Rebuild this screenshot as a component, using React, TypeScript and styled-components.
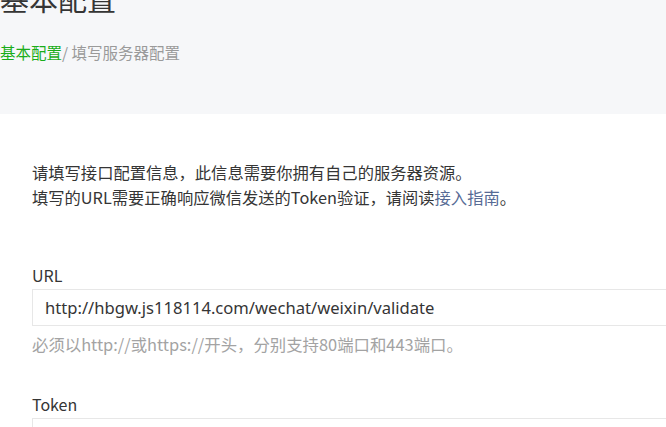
import React from "react";
import styled, { createGlobalStyle } from "styled-components";

const GlobalStyle = createGlobalStyle`
  html, body {
    margin: 0;
    padding: 0;
    background: #ffffff;
    overflow: hidden;
  }
  body {
    font-family: "Noto Sans CJK SC", "Noto Sans", sans-serif;
    color: #353535;
  }
`;

const Page = styled.div`
  width: 666px;
  overflow: hidden;
`;

const Header = styled.div`
  background: #f6f7f9;
  margin-top: -22px;
  height: 136px;
  box-sizing: border-box;
`;

const Title = styled.h1`
  margin: 0;
  font-size: 29px;
  line-height: 40px;
  font-weight: 400;
  color: #353535;
`;

const Breadcrumb = styled.div`
  margin-top: 22px;
  font-size: 15.5px;
  line-height: 24px;
  color: #9a9a9a;
`;

const Crumb = styled.span`
  color: #1aad19;
`;

const Body = styled.div`
  padding: 46px 0 0 32px;
`;

const Intro = styled.p`
  margin: 0;
  font-size: 16.3px;
  line-height: 25px;
  color: #353535;
`;

const Link = styled.a`
  color: #576b95;
  text-decoration: none;
`;

const Field = styled.div<{ gap?: number }>`
  margin-top: ${(p) => p.gap ?? 0}px;
`;

const Label = styled.div`
  font-size: 16px;
  line-height: 24px;
  color: #353535;
  margin-bottom: 2px;
`;

const Input = styled.div`
  box-sizing: border-box;
  width: 660px;
  height: 37px;
  border: 1px solid #e7e7e7;
  border-right: none;
  padding: 0 12px;
  font-family: "Noto Sans", sans-serif;
  font-size: 16.6px;
  line-height: 35px;
  color: #353535;
  white-space: nowrap;
`;

const Hint = styled.div`
  margin-top: 6px;
  font-size: 16.4px;
  line-height: 24px;
  color: #a3a3a3;
`;

export default function App() {
  return (
    <Page>
      <GlobalStyle />
      <Header>
        <Title>基本配置</Title>
        <Breadcrumb>
          <Crumb>基本配置</Crumb>/ 填写服务器配置
        </Breadcrumb>
      </Header>
      <Body>
        <Intro>请填写接口配置信息，此信息需要你拥有自己的服务器资源。</Intro>
        <Intro>
          填写的URL需要正确响应微信发送的Token验证，请阅读
          <Link href="#">接入指南</Link>。
        </Intro>
        <Field gap={53}>
          <Label>URL</Label>
          <Input>http://hbgw.js118114.com/wechat/weixin/validate</Input>
          <Hint>必须以http://或https://开头，分别支持80端口和443端口。</Hint>
        </Field>
        <Field gap={36}>
          <Label>Token</Label>
          <Input />
        </Field>
      </Body>
    </Page>
  );
}
